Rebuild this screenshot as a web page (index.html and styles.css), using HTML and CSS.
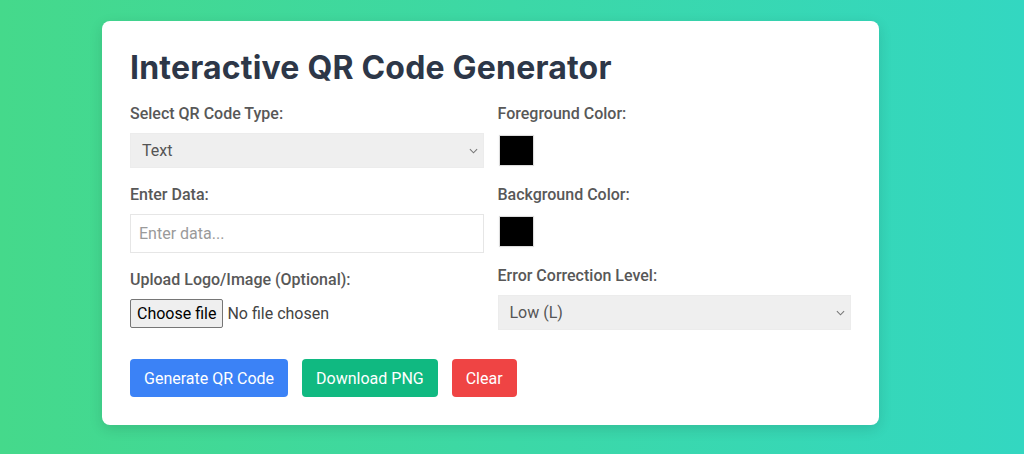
FILE: index.html
```html
<!DOCTYPE html>
<html lang="en">
<head>
<meta charset="utf-8">
<title>Interactive QR Code Generator</title>
<link rel="stylesheet" href="styles.css">
</head>
<body>
<div class="page">
  <div class="card">
    <h1 class="title">Interactive QR Code Generator</h1>
    <div class="grid">
      <div class="col">
        <div class="group">
          <label class="label">Select QR Code Type:</label>
          <div class="select"><span>Text</span><svg class="chev" viewBox="0 0 10 6" width="9" height="6"><path d="M1 1l4 4 4-4" fill="none" stroke="#777" stroke-width="1.2"/></svg></div>
        </div>
        <div class="group">
          <label class="label">Enter Data:</label>
          <div class="input"><span class="placeholder">Enter data...</span></div>
        </div>
        <div class="group">
          <label class="label">Upload Logo/Image (Optional):</label>
          <div class="file"><span class="file-btn">Choose file</span><span class="file-text">No file chosen</span></div>
        </div>
      </div>
      <div class="col">
        <div class="group">
          <label class="label">Foreground Color:</label>
          <div class="color"><span class="swatch"></span></div>
        </div>
        <div class="group">
          <label class="label">Background Color:</label>
          <div class="color"><span class="swatch"></span></div>
        </div>
        <div class="group">
          <label class="label">Error Correction Level:</label>
          <div class="select"><span>Low (L)</span><svg class="chev" viewBox="0 0 10 6" width="9" height="6"><path d="M1 1l4 4 4-4" fill="none" stroke="#777" stroke-width="1.2"/></svg></div>
        </div>
      </div>
    </div>
    <div class="buttons">
      <button class="btn btn-blue">Generate QR Code</button>
      <button class="btn btn-green">Download PNG</button>
      <button class="btn btn-red">Clear</button>
    </div>
  </div>
</div>
</body>
</html>
```
FILE: styles.css
```css
* { box-sizing: border-box; }
html, body { margin: 0; height: 100%; }
body {
  background: linear-gradient(to right, #45d98b, #33d7c1);
  font-family: Roboto, "Liberation Sans", sans-serif;
  overflow: hidden;
}
.page {
  padding: 21px 0 0 102px;
}
.card {
  width: 777px;
  background: #fff;
  border-radius: 8px;
  box-shadow: 0 4px 14px rgba(0,0,0,0.12);
  padding: 28px;
}
.title {
  margin: 0 0 16px 0;
  font-family: Inter, "Liberation Sans", sans-serif;
  font-weight: 700;
  font-size: 32px;
  line-height: 38px;
  color: #2d3748;
  letter-spacing: 0.2px;
}
.grid {
  display: grid;
  grid-template-columns: 1fr 1fr;
  column-gap: 14px;
}
.col { display: flex; flex-direction: column; }
.group { margin-bottom: 16px; }
.label {
  display: block;
  font-size: 16px;
  line-height: 22px;
  font-weight: 500;
  color: #585858;
  margin-bottom: 8px;
}
.select {
  height: 35px;
  background: #efefef;
  border: 1px solid #ececec;
  display: flex;
  align-items: center;
  justify-content: space-between;
  padding: 0 5px 0 11px;
  font-size: 16px;
  color: #555;
}
.chev { margin-top: 1px; }
.input {
  height: 39px;
  border: 1px solid #e6e6e6;
  display: flex;
  align-items: center;
  padding: 0 8px;
  font-size: 16px;
}
.placeholder { color: #9a9a9a; }
.file {
  display: flex;
  align-items: center;
  height: 29px;
  font-size: 16px;
}
.file-btn {
  height: 29px;
  display: flex;
  align-items: center;
  padding: 0 6px;
  background: #efefef;
  border: 1px solid #767676;
  border-radius: 2px;
  color: #000;
}
.file-text { margin-left: 4px; color: #444; }
.color {
  height: 35px;
  display: flex;
  align-items: center;
  padding-left: 1px;
}
.swatch {
  display: block;
  width: 35px;
  height: 31px;
  background: #000;
  border: 1px solid #dcdcdc;
  box-shadow: 0 0 2px rgba(0,0,0,0.06);
}
.buttons {
  display: flex;
  gap: 14px;
  margin-top: 13px;
}
.btn {
  font-family: Roboto, "Liberation Sans", sans-serif;
  font-size: 16px;
  height: 38px;
  padding: 0 14px;
  border: none;
  border-radius: 4px;
  color: #fff;
}
.btn-blue { background: #3b82f6; }
.btn-green { background: #10b981; }
.btn-red { background: #ef4444; }
```
